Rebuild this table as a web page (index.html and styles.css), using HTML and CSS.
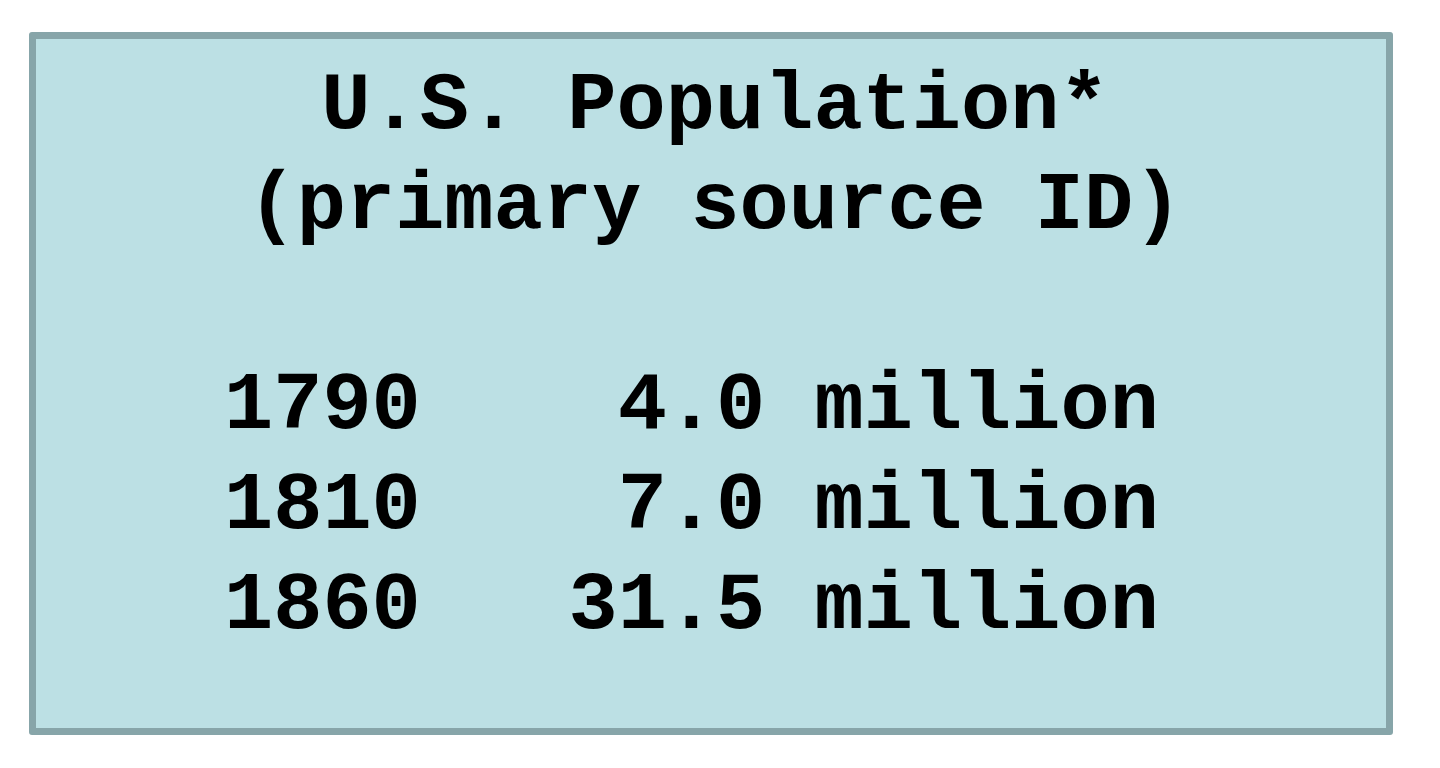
FILE: index.html
```html
<!DOCTYPE html>
<html lang="en">

<head>
  <meta charset="UTF-8">
  <meta name="viewport" content="width=device-width, initial-scale=1.0">
  <title>U.S. Population</title>
  <link rel="stylesheet" href="styles.css">
</head>

<body>
  <div class="card">
    <div class="card-title">
      <div>U.S. Population*</div>
      <div>(primary source ID)</div>
    </div>

    <!-- population by year -->
    <div class="pop-table">
      <span class="year">1790</span>
      <span class="amount">4.0</span>
      <span class="unit">million</span>

      <span class="year">1810</span>
      <span class="amount">7.0</span>
      <span class="unit">million</span>

      <span class="year">1860</span>
      <span class="amount">31.5</span>
      <span class="unit">million</span>
    </div>
  </div>
</body>

</html>
```

FILE: styles.css
```css
body {
  margin: 0;
  padding: 0;
  background-color: #fff;
  color: #000;
}

.card {
  box-sizing: border-box;
  width: 1364px;
  height: 703px;
  margin: 32px 0 0 29px;
  padding: 18px 0 0 0;
  background-color: #bce0e4;
  border: 7px solid #87a5a9;
  border-radius: 3px;
  font-family: "Liberation Mono", "Courier New", monospace;
  font-weight: bold;
  font-size: 82px;
  line-height: 100px;
}

.card-title {
  text-align: center;
  padding-left: 8px;
}

.pop-table {
  display: grid;
  grid-template-columns: 4ch 7ch auto;
  margin-top: 100px;
  padding-left: 188px;
}

.pop-table .amount {
  text-align: right;
}

.pop-table .unit {
  padding-left: 1ch;
}
```
